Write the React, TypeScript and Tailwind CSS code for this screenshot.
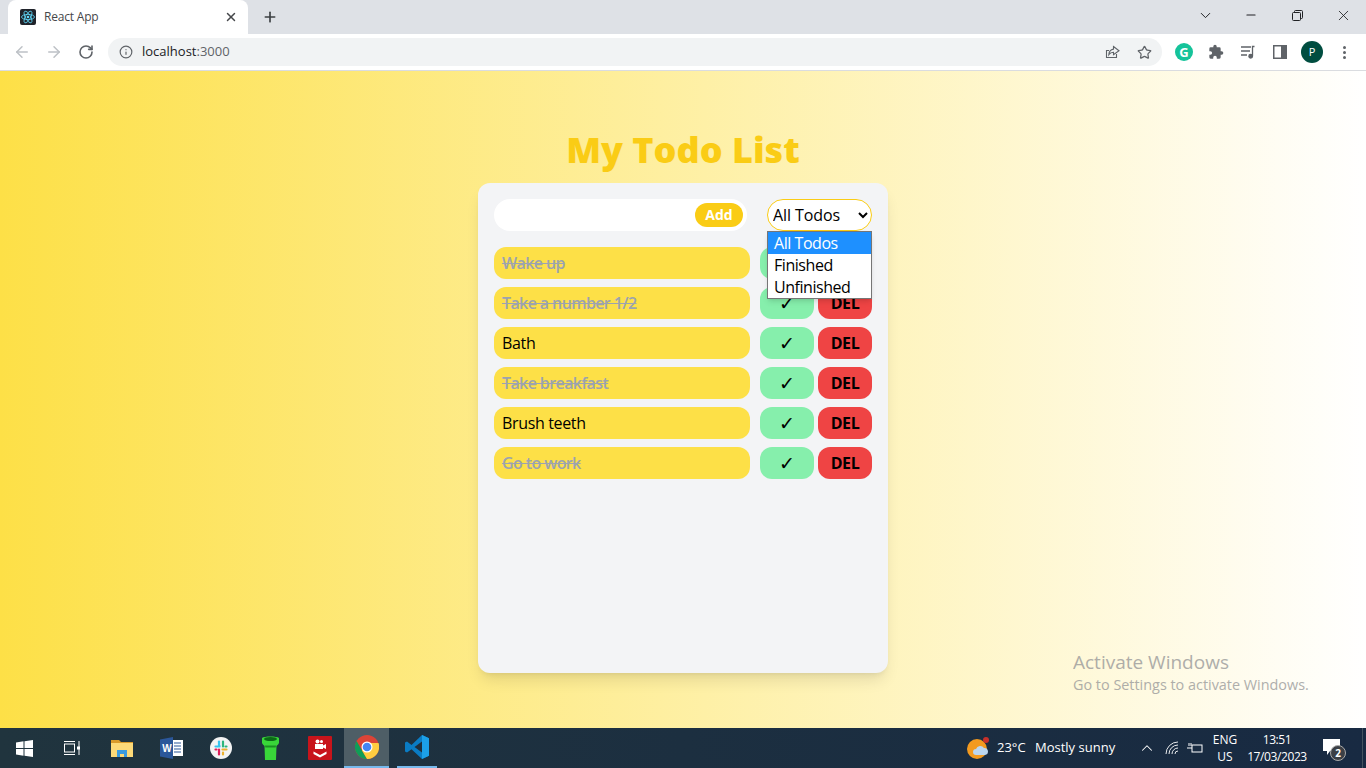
import { ArrowLeft, ArrowRight, ChevronDown, ChevronUp, Info, Minus, Plus, RotateCw, Star, X } from 'lucide-react';

const todos = [
  { text: 'Wake up', done: true },
  { text: 'Take a number 1/2', done: true },
  { text: 'Bath', done: false },
  { text: 'Take breakfast', done: true },
  { text: 'Brush teeth', done: false },
  { text: 'Go to work', done: true },
];

function ChromeBar() {
  return (
    <div className="shrink-0 font-['Open_Sans',sans-serif]">
      <div className="h-[34px] bg-[#dee1e6] flex items-end pl-2">
        <div className="w-[240px] h-[34px] bg-white rounded-t-lg flex items-center pl-3 pr-[10px]">
          <svg width="16" height="16" viewBox="0 0 16 16" className="shrink-0">
            <rect width="16" height="16" rx="2" fill="#20232a" />
            <g fill="none" stroke="#61dafb" strokeWidth="0.8">
              <ellipse cx="8" cy="8" rx="6.5" ry="2.6" />
              <ellipse cx="8" cy="8" rx="6.5" ry="2.6" transform="rotate(60 8 8)" />
              <ellipse cx="8" cy="8" rx="6.5" ry="2.6" transform="rotate(120 8 8)" />
            </g>
            <circle cx="8" cy="8" r="1.3" fill="#61dafb" />
          </svg>
          <span className="ml-2 text-xs tracking-[-0.2px] text-[#45474a] flex-1">React App</span>
          <X size={14} strokeWidth={2.5} className="text-[#45474a]" />
        </div>
        <div className="w-[44px] h-[34px] flex items-center justify-center">
          <Plus size={16} strokeWidth={2.5} className="text-[#3c4043]" />
        </div>
        <div className="flex-1" />
        <div className="w-[46px] h-[30px] flex items-center justify-center self-start">
          <ChevronDown size={17} strokeWidth={1.4} className="text-[#202124]" />
        </div>
        <div className="w-[46px] h-[30px] flex items-center justify-center self-start">
          <Minus size={14} strokeWidth={1.8} className="text-[#202124]" />
        </div>
        <div className="w-[46px] h-[30px] flex items-center justify-center self-start">
          <svg width="11" height="11" viewBox="0 0 11 11" fill="none" stroke="#202124">
            <rect x="0.5" y="2.5" width="8" height="8" rx="1" />
            <path d="M2.5 2.5V1.5a1 1 0 0 1 1-1h6a1 1 0 0 1 1 1v6a1 1 0 0 1-1 1h-1" />
          </svg>
        </div>
        <div className="w-[46px] h-[30px] flex items-center justify-center self-start">
          <X size={17} strokeWidth={1.2} className="text-[#202124]" />
        </div>
      </div>
      <div className="h-[37px] bg-white border-b border-[#dadce0] flex items-center pl-[6px] pr-[20px]">
        <div className="w-8 flex justify-center"><ArrowLeft size={18} className="text-[#bdc1c6]" /></div>
        <div className="w-8 flex justify-center"><ArrowRight size={18} className="text-[#bdc1c6]" /></div>
        <div className="w-8 flex justify-center"><RotateCw size={16} strokeWidth={2.4} className="text-[#5f6368]" /></div>
        <div className="ml-[6px] flex-1 h-[28px] rounded-full bg-[#f1f3f4] flex items-center pl-[11px] pr-[10px]">
          <Info size={14} strokeWidth={2} className="text-[#5f6368]" />
          <span className="ml-[9px] text-[13px] text-[#202124] flex-1">localhost<span className="text-[#5f6368]">:3000</span></span>
          <svg width="16" height="16" viewBox="0 0 16 16" fill="none" stroke="#5f6368" strokeWidth="1.1" className="mr-[17px]">
            <path d="M12.5 10v3.5h-10V6.5H5" />
            <path d="M9.5 2.5 15 6.7l-5.5 4V8.3C7.5 8.3 6 9 4.8 10.8 5 7.5 6.800 5.500 9.500 5.100Z" />
          </svg>
          <Star size={15} strokeWidth={2} className="text-[#5f6368]" />
        </div>
        <div className="ml-[13px] w-[18px] h-[18px] rounded-full bg-[#15c39a] flex items-center justify-center">
          <span className="text-white text-[13px] font-bold leading-none">G</span>
        </div>
        <svg width="16" height="16" viewBox="0 0 24 24" fill="#5f6368" className="ml-[15px]">
          <path d="M20.500 11H19V7a2 2 0 0 0-2-2h-4V3.500a2.500 2.500 0 0 0-5 0V5H4a2 2 0 0 0-2 2v3.800h1.500a2.700 2.700 0 0 1 0 5.400H2V20a2 2 0 0 0 2 2h3.800v-1.500a2.700 2.700 0 0 1 5.400 0V22H17a2 2 0 0 0 2-2v-4h1.500a2.500 2.500 0 0 0 0-5z" />
        </svg>
        <svg width="16" height="16" viewBox="0 0 16 16" fill="none" stroke="#5f6368" strokeWidth="1.300" className="ml-[16px]">
          <path d="M1 3h10M1 7h9M1 11h6M14.500 2.500H12.500V12" />
          <circle cx="10.700" cy="12.300" r="1.800" fill="#5f6368" />
        </svg>
        <svg width="14" height="14" viewBox="0 0 14 14" className="ml-[17px]">
          <rect x="0" y="0" width="14" height="14" fill="#5f6368" />
          <rect x="1.500" y="1.500" width="6.500" height="11" fill="#fff" />
        </svg>
        <div className="ml-[14px] w-[22px] h-[22px] rounded-full bg-[#004d40] flex items-center justify-center text-white text-[11px]">P</div>
        <div className="ml-[20px] flex flex-col gap-[2px]">
          <div className="w-[3px] h-[3px] rounded-full bg-[#5f6368]" />
          <div className="w-[3px] h-[3px] rounded-full bg-[#5f6368]" />
          <div className="w-[3px] h-[3px] rounded-full bg-[#5f6368]" />
        </div>
      </div>
    </div>
  );
}

function TodoCard() {
  return (
    <div className="relative w-[410px] h-[490px] rounded-xl bg-[#f3f4f6] shadow-lg p-4">
      <div className="flex">
        <div className="w-[253px] h-8 rounded-2xl bg-white flex items-center justify-end pr-1">
          <button className="w-12 h-6 rounded-xl bg-[#facc15] text-white text-sm font-bold">Add</button>
        </div>
        <select className="ml-5 w-[105px] h-8 rounded-2xl border border-[#facc15] bg-white text-base tracking-[-0.1px] pl-[1px] text-black outline-none">
          <option>All Todos</option>
          <option>Finished</option>
          <option>Unfinished</option>
        </select>
      </div>
      <div className="mt-4 flex flex-col gap-2">
        {todos.map((todo) => (
          <div key={todo.text} className="flex h-8">
            <div className={`w-[256px] rounded-xl bg-[#fde047] flex items-center px-2 text-base ${todo.done ? 'line-through text-[#9ca3af] font-semibold tracking-[-0.6px]' : 'text-black tracking-[-0.35px]'}`}>
              {todo.text}
            </div>
            <button className="ml-[10px] w-[54px] rounded-xl bg-[#86efac] text-black text-[19px] leading-none">✓</button>
            <button className="ml-1 w-[54px] rounded-xl bg-[#ef4444] text-black text-base font-bold tracking-[-0.4px]">DEL</button>
          </div>
        ))}
      </div>
      {/* open select list sits on top of the rows */}
      <div className="absolute left-[289px] top-[48px] w-[105px] h-[68px] bg-white border border-[#767676] shadow-md text-base tracking-[-0.45px] leading-[22px] text-black overflow-hidden">
        <div className="bg-[#1e90ff] text-white pl-[6px]">All Todos</div>
        <div className="pl-[6px]">Finished</div>
        <div className="pl-[6px]">Unfinished</div>
      </div>
    </div>
  );
}

function TaskbarIcons() {
  return (
    <div className="flex h-10 items-center">
      <div className="w-12 flex justify-center">
        <svg width="17" height="17" viewBox="0 0 17 17" fill="#fff">
          <path d="M0 2.400 7.500 1.300V8H0zM8.500 1.200 17 0v8H8.500zM0 9h7.500v6.700L0 14.600zM8.500 9H17v8L8.500 15.800z" />
        </svg>
      </div>
      <div className="w-12 flex justify-center">
        <svg width="16" height="16" viewBox="0 0 16 16" fill="none" stroke="#fff" strokeWidth="1">
          <rect x="0.500" y="4" width="10" height="8" />
          <path d="M0 1.500h11M0 14.500h11M15 1v14" />
          <rect x="13" y="6.500" width="3" height="3" fill="#fff" stroke="none" />
        </svg>
      </div>
      <div className="w-[51px] flex justify-center">
        <svg width="22" height="18" viewBox="0 0 22 18">
          <path d="M0 1h8l2 2h12v15H0z" fill="#d99a2b" />
          <rect x="0" y="4" width="22" height="14" fill="#fcd978" />
          <path d="M6 18v-7h10v7h-3v-3H9v3z" fill="#3a9be0" />
        </svg>
      </div>
      <div className="w-[49px] flex justify-center">
        <svg width="23" height="22" viewBox="0 0 23 22">
          <rect x="8" y="3" width="15" height="16" fill="#fff" />
          <path d="M14 6h7M14 9h7M14 12h7M14 15h7" stroke="#2b579a" strokeWidth="1.200" />
          <path d="M0 2.500 13 0v22L0 19.500z" fill="#2b579a" />
          <text x="2.200" y="15" fontSize="10" fontWeight="700" fill="#fff" fontFamily="Liberation Sans, sans-serif">W</text>
        </svg>
      </div>
      <div className="w-[50px] flex justify-center">
        <svg width="22" height="22" viewBox="0 0 22 22">
          <circle cx="11" cy="11" r="11" fill="#f3f3f3" />
          <path d="M5.500 9.500h4M9.500 9.500V9" stroke="#36c5f0" strokeWidth="2.200" fill="none" strokeLinecap="round" />
          <path d="M9 4.500v4" stroke="#36c5f0" strokeWidth="2.200" strokeLinecap="round" />
          <path d="M13 4.500v5M15.500 9.500h1" stroke="#2eb67d" strokeWidth="2.200" strokeLinecap="round" />
          <path d="M9 12.500v5M5.500 12.500h1" stroke="#e01e5a" strokeWidth="2.200" strokeLinecap="round" />
          <path d="M12.500 12.500h4M13 15.500v2" stroke="#ecb22e" strokeWidth="2.200" strokeLinecap="round" />
        </svg>
      </div>
      <div className="w-[49px] flex justify-center">
        <svg width="17" height="24" viewBox="0 0 17 24">
          <path d="M0 2C2 0 15 0 17 2v5c-1 2-2 2-2.500 3l-.500 14H3L2.500 10C2 9 1 9 0 7z" fill="#39d639" />
          <ellipse cx="8.500" cy="3" rx="6.500" ry="2" fill="#0b6a16" />
          <path d="M3 9.500h11l-.3 2H3.300z" fill="#1a8f22" />
        </svg>
      </div>
      <div className="w-[49px] flex justify-center">
        <svg width="24" height="24" viewBox="0 0 24 24">
          <rect width="24" height="24" rx="1" fill="#c8141b" />
          <circle cx="9.500" cy="5.500" r="2" fill="#fff" />
          <circle cx="13.500" cy="5.500" r="1.500" fill="#fff" />
          <path d="M7 8h8v1.500L18 8v5l-3-1.500V13H7z" fill="#fff" />
          <path d="M5.500 15.500l6.500 3.500 6.500-3.500V18L12 21.500 5.500 18z" fill="#fff" />
        </svg>
      </div>
      <div className="w-[45px] h-10 bg-[#4e5e66] border-b-2 border-[#76b9ed] flex justify-center items-center">
        <svg width="24" height="24" viewBox="0 0 24 24">
          <circle cx="12" cy="12" r="12" fill="#db4437" />
          <path d="M12 24A12 12 0 0 1 1.600 6L7 15.500 12 24z" fill="#0f9d58" />
          <path d="M23.500 8H12l-5 7.500L12 24A12 12 0 0 0 23.500 8z" fill="#ffcd40" />
          <circle cx="12" cy="12" r="5.500" fill="#fff" />
          <circle cx="12" cy="12" r="4.300" fill="#4285f4" />
        </svg>
      </div>
      <div className="ml-2 w-10 h-10 border-b-2 border-[#76b9ed] flex justify-center items-center">
        <svg width="24" height="24" viewBox="0 0 24 24">
          <path d="M17 0l7 3.300v17.400L17 24 6.500 14.200 2 17.600 0 16.500v-9l2-1 4.500 3.400z" fill="#0a7cc4" />
          <path d="M17 6.500 9.500 12l7.500 5.500z" fill="#1f2f3c" />
          <path d="M17 0l7 3.300v17.400L17 24z" fill="#1ca0e8" />
        </svg>
      </div>
    </div>
  );
}

function SystemTray() {
  return (
    <div className="flex h-10 items-center text-white">
      <svg width="24" height="24" viewBox="0 0 24 24" className="mr-[6px]">
        <circle cx="10" cy="13" r="10" fill="#f39a1f" />
        <circle cx="19" cy="4" r="3" fill="#c8302a" />
        <path d="M9 19a3 3 0 0 1 0-6 4.500 4.500 0 0 1 8-1 3.500 3.500 0 0 1 4 3.500 3.500 3.500 0 0 1-3 3.500z" fill="#bcd6ee" />
      </svg>
      <span className="text-[13px] w-[38px]">23°C</span>
      <span className="text-[13px] w-[103px]">Mostly sunny</span>
      <ChevronUp size={18} strokeWidth={1.400} className="mr-[9px]" />
      <svg width="14" height="14" viewBox="0 0 14 14" fill="none" stroke="#fff" strokeWidth="0.900" className="mr-[8px]">
        <path d="M1 13A12 12 0 0 1 13 1M4 13a9 9 0 0 1 9-9M7 13a6 6 0 0 1 6-6M10 13a3 3 0 0 1 3-3" />
      </svg>
      <svg width="16" height="12" viewBox="0 0 16 12" fill="none" stroke="#fff" strokeWidth="1" className="mr-[8px]">
        <rect x="5" y="3" width="10" height="7" />
        <path d="M0 6h5M2 1v3M4 1v3" />
      </svg>
      <div className="w-[28px] text-center text-xs leading-[17px]">
        <div>ENG</div>
        <div>US</div>
      </div>
      <div className="ml-[4px] w-[68px] text-center text-xs tracking-[-0.4px] leading-[17px]">
        <div>13:51</div>
        <div>17/03/2023</div>
      </div>
      <div className="relative ml-[12px] w-[30px] h-10 flex items-center">
        <svg width="18" height="17" viewBox="0 0 18 17" fill="#fff" className="mb-[2px]">
          <path d="M0 0h17v12H7l-3 4v-4H0z" />
        </svg>
        <div className="absolute left-[7px] top-[17px] w-4 h-4 rounded-full bg-[#3b3f45] border border-[#aaa] text-[10px] leading-[14px] text-center font-bold">2</div>
      </div>
      <div className="ml-[9px] w-px h-10 bg-[#43535f]" />
      <div className="w-[3px]" />
    </div>
  );
}

export default function App() {
  return (
    <div className="h-screen w-full overflow-hidden flex flex-col font-['Open_Sans',sans-serif]">
      <ChromeBar />
      <main className="relative flex-1 bg-linear-to-r/srgb from-[#fde047] to-white flex flex-col items-center">
        <h1 className="mt-[53px] h-[59px] text-4xl leading-[52px] font-black text-[#facc15]">My Todo List</h1>
        <TodoCard />
        {/* Windows activation watermark */}
        <div className="absolute left-[1073px] top-[578px] text-[#9b9b9b] opacity-80">
          <div className="text-[19px] leading-[26px]">Activate Windows</div>
          <div className="text-[14.4px] leading-[20px]">Go to Settings to activate Windows.</div>
        </div>
      </main>
      <footer className="h-10 shrink-0 bg-linear-to-r/srgb from-[#20343e] to-[#182a42] flex justify-between">
        <TaskbarIcons />
        <SystemTray />
      </footer>
    </div>
  );
}
